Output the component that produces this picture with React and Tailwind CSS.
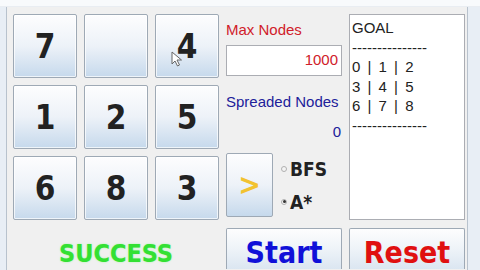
import React from "react";

const tiles = ["7", "", "4", "1", "2", "5", "6", "8", "3"];

function Tile({ value, cursor }) {
  return (
    <div className="relative h-[64px] w-[64px] rounded-[2px] border border-[#9ea9b5] bg-gradient-to-b from-[#fdfdfe] via-[#edf2f8] to-[#c6d9ec] shadow-[inset_0_0_0_1px_rgba(255,255,255,0.7)] flex items-center justify-center">
      <span className="text-[33px] font-bold leading-none text-[#222] font-[family-name:'DejaVu_Sans_Condensed','DejaVu_Sans',sans-serif]">
        {value}
      </span>
      {cursor && (
        <svg
          className="absolute left-[15px] top-[36px]"
          width="12"
          height="16"
          viewBox="0 0 12 16"
        >
          <path
            d="M1 1 L1 13 L4 10 L6.5 15 L8.5 14 L6 9 L10.5 9 Z"
            fill="#fff"
            stroke="#666"
            strokeWidth="1"
            strokeLinejoin="round"
          />
        </svg>
      )}
    </div>
  );
}

export default function App() {
  return (
    <div className="w-[480px] h-[270px] overflow-hidden bg-[#f0f0f0] flex flex-col font-[family-name:'Liberation_Sans',Arial,sans-serif]">
      {/* title bar remnant */}
      <div className="h-[7px] shrink-0 bg-[#f8fafc] border-b border-[#e9edf2]" />
      <div className="flex flex-1 min-h-0">
        <div className="w-[7px] shrink-0 bg-[#e8eef5] border-r border-[#b8c2cd]" />
        <div className="flex-1 pl-[6px] pt-[7px] grid grid-cols-[206px_116px_116px] grid-rows-[206px_auto] gap-x-[7px] gap-y-[8px]">
          {/* puzzle grid */}
          <div className="grid grid-cols-[64px_64px_64px] gap-x-[7px] gap-y-[7px]">
            {tiles.map((t, i) => (
              <Tile key={i} value={t} cursor={i === 2} />
            ))}
          </div>

          {/* controls */}
          <div className="flex flex-col">
            <div className="mt-[6px] h-[20px] text-[15px] leading-[20px] text-[#d0202a]">
              Max Nodes
            </div>
            <div className="mt-[5px] h-[31px] border border-[#abadb3] bg-white flex items-center justify-end pr-[3px] text-[15px] text-[#d0202a]">
              1000
            </div>
            <div className="mt-[16px] h-[20px] text-[15px] leading-[20px] text-[#20209a] whitespace-nowrap">
              Spreaded Nodes
            </div>
            <div className="mt-[10px] h-[20px] text-[15px] leading-[20px] text-[#20209a] text-right pr-[1px]">
              0
            </div>
            <div className="mt-[11px] flex">
              <div className="h-[64px] w-[47px] rounded-[2px] border border-[#9ea9b5] bg-gradient-to-b from-[#fdfdfe] via-[#edf2f8] to-[#c6d9ec] flex items-center justify-center">
                <span className="text-[30px] font-bold leading-none text-[#f2c230] font-[family-name:'DejaVu_Sans_Condensed','DejaVu_Sans',sans-serif]">
                  &gt;
                </span>
              </div>
              <div className="ml-[8px] flex flex-col justify-center gap-[11px] text-[19px] font-bold text-[#222] font-[family-name:'DejaVu_Sans_Condensed','DejaVu_Sans',sans-serif]">
                <label className="flex items-center gap-[3px] leading-[22px]">
                  <span className="h-[6px] w-[6px] rounded-full border border-[#b0b0b0] bg-[#f4f4f4]" />
                  BFS
                </label>
                <label className="flex items-center gap-[3px] leading-[22px]">
                  <span className="h-[6px] w-[6px] rounded-full border border-[#b0b0b0] bg-[#f4f4f4] flex items-center justify-center">
                    <span className="h-[3px] w-[3px] rounded-full bg-[#333]" />
                  </span>
                  A*
                </label>
              </div>
            </div>
          </div>

          {/* output text box */}
          <div className="border border-[#abadb3] bg-white pl-[2px] pt-[3px] text-[15px] leading-[19.5px] text-[#222] whitespace-pre [word-spacing:3px]">
            <div>GOAL</div>
            <div>---------------</div>
            <div>0 | 1 | 2</div>
            <div>3 | 4 | 5</div>
            <div>6 | 7 | 8</div>
            <div>---------------</div>
          </div>

          {/* bottom row */}
          <div className="flex items-start justify-center pt-[10px]">
            <span className="text-[25px] font-bold leading-[32px] text-[#33e033] [text-shadow:0_0_2px_#9ff59f] font-[family-name:'DejaVu_Sans_Condensed','DejaVu_Sans',sans-serif]">
              SUCCESS
            </span>
          </div>
          <div className="h-[41px] rounded-t-[2px] border border-b-0 border-[#9ea9b5] bg-gradient-to-b from-[#fdfdfe] via-[#eef3f8] to-[#dbe6f1] flex justify-center items-start pt-[12px]">
            <span className="text-[30px] font-bold leading-[24px] text-[#1010d8] font-[family-name:'DejaVu_Sans_Condensed','DejaVu_Sans',sans-serif]">
              Start
            </span>
          </div>
          <div className="h-[41px] rounded-t-[2px] border border-b-0 border-[#9ea9b5] bg-gradient-to-b from-[#fdfdfe] via-[#eef3f8] to-[#dbe6f1] flex justify-center items-start pt-[12px]">
            <span className="text-[30px] font-bold leading-[24px] text-[#e01010] font-[family-name:'DejaVu_Sans_Condensed','DejaVu_Sans',sans-serif]">
              Reset
            </span>
          </div>
        </div>
        <div className="w-[13px] shrink-0 bg-[#e8eef5] border-l border-[#b8c2cd]" />
      </div>
    </div>
  );
}
